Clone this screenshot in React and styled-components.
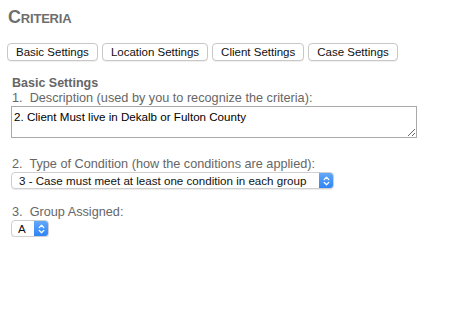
import React from "react";
import styled, { createGlobalStyle } from "styled-components";

const Global = createGlobalStyle`
  html, body { margin: 0; padding: 0; background: #fff; }
  body { font-family: "Liberation Sans", Arial, sans-serif; }
`;

const Page = styled.div`
  padding: 7px 8px 0 7px;
  width: 468px;
  box-sizing: border-box;
`;

const Title = styled.h1`
  margin: 0 0 0 1px;
  font-size: 18px;
  line-height: 20px;
  font-weight: bold;
  font-variant: small-caps;
  color: #6e6e6e;
  letter-spacing: -0.2px;
`;

const Tabs = styled.div`
  display: flex;
  gap: 4px;
  margin-top: 16px;
`;

const Tab = styled.button`
  font-family: "Liberation Sans", Arial, sans-serif;
  font-size: 11.5px;
  height: 18px;
  padding: 0 8px;
  line-height: 16px;
  color: #111;
  background: #fff;
  border: 1px solid #c8c8c8;
  border-radius: 4px;
  box-shadow: 0 1px 0 rgba(0,0,0,0.06);
`;

const Section = styled.div`
  padding: 0 0 0 4px;
  margin-top: 15px;
`;

const SectionTitle = styled.div`
  font-size: 12.5px;
  font-weight: bold;
  color: #666;
  line-height: 14px;
  padding-left: 1px;
`;

const Field = styled.div`
  display: flex;
  flex-direction: column;
  align-items: flex-start;
  margin-top: ${p => p.$top}px;
`;

const Label = styled.label`
  font-size: 12.7px;
  color: #666;
  line-height: 14px;
  padding-left: 1px;
  margin-bottom: 1px;
`;

const TextArea = styled.textarea`
  width: 406px;
  height: 32px;
  box-sizing: border-box;
  font-family: "Liberation Sans", Arial, sans-serif;
  font-size: 11.6px;
  color: #000;
  border: 1px solid #a9a9a9;
  padding: 3px 2px;
  margin: 0;
  resize: both;
`;

const SelectWrap = styled.div`
  display: inline-flex;
  align-items: stretch;
  height: 17px;
  box-sizing: border-box;
  border: 1px solid #cfcfcf;
  border-radius: 4px;
  background: #fff;
  box-shadow: 0 1px 1px rgba(0,0,0,0.08);
  overflow: hidden;
`;

const Select = styled.select`
  appearance: none;
  -webkit-appearance: none;
  border: none;
  outline: none;
  background: transparent;
  font-family: "Liberation Sans", Arial, sans-serif;
  font-size: 11.6px;
  color: #111;
  padding: 0 0 0 ${p => p.$pad}px;
  margin: 0;
  width: ${p => p.$w}px;
`;

const Arrow = styled.span`
  width: 14px;
  display: flex;
  align-items: center;
  justify-content: center;
  background: linear-gradient(#62a8fb, #2f84f5);
`;

const Stepper = () => (
  <Arrow>
    <svg width="7" height="10" viewBox="0 0 7 10" fill="none" stroke="#fff" strokeWidth="1.3" strokeLinecap="round" strokeLinejoin="round">
      <path d="M1.2 3.6 L3.5 1.3 L5.8 3.6" />
      <path d="M1.2 6.4 L3.5 8.7 L5.8 6.4" />
    </svg>
  </Arrow>
);

export default function App() {
  return (
    <>
      <Global />
      <Page>
        <Title>Criteria</Title>
        <Tabs>
          <Tab>Basic Settings</Tab>
          <Tab>Location Settings</Tab>
          <Tab>Client Settings</Tab>
          <Tab>Case Settings</Tab>
        </Tabs>
        <Section>
          <SectionTitle>Basic Settings</SectionTitle>
          <Field $top={1}>
            <Label>1.&nbsp; Description (used by you to recognize the criteria):</Label>
            <TextArea defaultValue="2. Client Must live in Dekalb or Fulton County" />
          </Field>
          <Field $top={19}>
            <Label>2.&nbsp; Type of Condition (how the conditions are applied):</Label>
            <SelectWrap>
              <Select $w={307} $pad={7} defaultValue="3">
                <option value="3">3 - Case must meet at least one condition in each group</option>
              </Select>
              <Stepper />
            </SelectWrap>
          </Field>
          <Field $top={16}>
            <Label>3.&nbsp; Group Assigned:</Label>
            <SelectWrap>
              <Select $w={22} $pad={6} defaultValue="A">
                <option value="A">A</option>
              </Select>
              <Stepper />
            </SelectWrap>
          </Field>
        </Section>
      </Page>
    </>
  );
}
